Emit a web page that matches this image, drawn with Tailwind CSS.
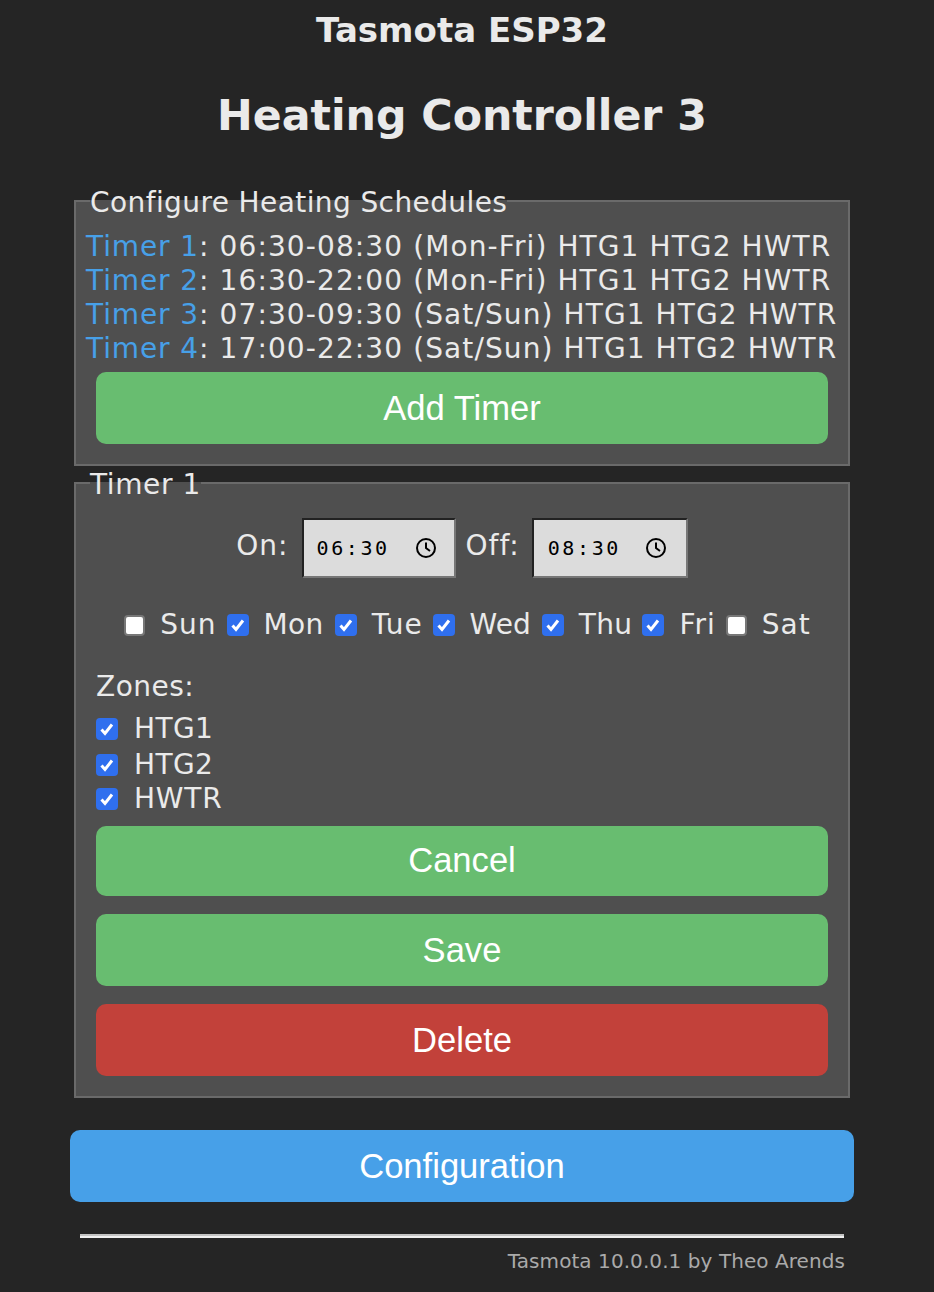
<!DOCTYPE html>
<html lang="en">
<head>
    <meta charset="UTF-8">
    <title>Heating Controller 3</title>
    <script src="https://cdn.jsdelivr.net/npm/@tailwindcss/browser@4"></script>
</head>
<body class="bg-[#252525] text-[#eaeaea] font-['DejaVu_Sans',sans-serif] h-[1292px] overflow-hidden">

<div class="w-[784px] ml-[70px]">

    <h3 class="text-[34px] leading-[38px] font-bold text-center pt-[11px]">Tasmota ESP32</h3>
    <h2 class="text-[42.7px] leading-[52px] font-bold text-center mt-[40px] mb-[44px]">Heating Controller 3</h2>

    <!-- Schedules -->
    <fieldset class="mx-[4px] border-2 border-[#6a6a6a] bg-[#4f4f4f] px-[10px] h-[281px]">
        <legend class="ml-[4px] text-[28px] leading-[32px] tracking-[0.4px]"><span class="relative top-[2px]">Configure Heating Schedules</span></legend>
        <div class="text-[28px] leading-[34px] tracking-[1.1px] whitespace-nowrap pt-[1px] mt-[12px] -mb-[1px]">
            <div><span class="text-[#47a0e8] tracking-[0.9px]">Timer 1</span>: 06:30-08:30 (Mon-Fri) HTG1 HTG2 HWTR</div>
            <div><span class="text-[#47a0e8] tracking-[0.9px]">Timer 2</span>: 16:30-22:00 (Mon-Fri) HTG1 HTG2 HWTR</div>
            <div><span class="text-[#47a0e8] tracking-[0.9px]">Timer 3</span>: 07:30-09:30 (Sat/Sun) HTG1 HTG2 HWTR</div>
            <div><span class="text-[#47a0e8] tracking-[0.9px]">Timer 4</span>: 17:00-22:30 (Sat/Sun) HTG1 HTG2 HWTR</div>
        </div>
        <button class="block w-[732px] h-[72px] mx-[10px] mt-[7px] pt-[2px] rounded-[10px] bg-[#68bd70] text-white font-['Liberation_Sans',sans-serif] text-[34.6px]">Add Timer</button>
    </fieldset>

    <!-- Timer editor -->
    <fieldset class="mx-[4px] mt-[1px] border-2 border-[#6a6a6a] bg-[#4f4f4f] px-[20px] h-[631px]">
        <legend class="-ml-[6px] text-[28px] leading-[32px] tracking-[0.6px]"><span class="relative top-[2px]">Timer 1</span></legend>

        <div class="flex justify-center items-center mt-[19px] text-[28px] tracking-[1px]">
            <span class="mb-[4px] mr-[13px]">On:</span>
            <div class="w-[154px] h-[60px] bg-[#dcdcdc] border-2 border-t-[#222] border-l-[#222] border-r-[#777] border-b-[#777] flex items-center justify-between pl-[13px] pr-[18px] text-black text-[20px] tracking-[2.6px] font-['DejaVu_Sans_Mono',monospace]">
                <span>06:30</span>
                <svg class="w-[20px] h-[20px]" viewBox="0 0 20 20" fill="none" stroke="black" stroke-width="2"><circle cx="10" cy="10" r="9"/><path d="M10 4.5v5.5l4 3"/></svg>
            </div>
            <span class="mb-[4px] ml-[10px] mr-[12px]">Off:</span>
            <div class="w-[156px] h-[60px] bg-[#dcdcdc] border-2 border-t-[#222] border-l-[#222] border-r-[#777] border-b-[#777] flex items-center justify-between pl-[14px] pr-[20px] text-black text-[20px] tracking-[2.6px] font-['DejaVu_Sans_Mono',monospace]">
                <span>08:30</span>
                <svg class="w-[20px] h-[20px]" viewBox="0 0 20 20" fill="none" stroke="black" stroke-width="2"><circle cx="10" cy="10" r="9"/><path d="M10 4.5v5.5l4 3"/></svg>
            </div>
        </div>

        <div class="flex justify-center items-center pl-[11px] mt-[30px] text-[28px] leading-[34px] tracking-[1px] whitespace-nowrap">
            <span class="w-[21px] h-[21px] rounded-[4px] bg-white border-2 border-[#777] mr-[15px]"></span><span class="mr-[10px]">Sun</span>
            <span class="w-[22px] h-[22px] rounded-[4px] bg-[#2f6fee] flex items-center justify-center mr-[15px]"><svg class="w-[16px] h-[16px]" viewBox="0 0 16 16" fill="none" stroke="white" stroke-width="3"><path d="M2.5 8.5l3.5 4 7-9"/></svg></span><span class="mr-[11px] tracking-[0.4px]">Mon</span>
            <span class="w-[22px] h-[22px] rounded-[4px] bg-[#2f6fee] flex items-center justify-center mr-[15px]"><svg class="w-[16px] h-[16px]" viewBox="0 0 16 16" fill="none" stroke="white" stroke-width="3"><path d="M2.5 8.5l3.5 4 7-9"/></svg></span><span class="mr-[10px]">Tue</span>
            <span class="w-[22px] h-[22px] rounded-[4px] bg-[#2f6fee] flex items-center justify-center mr-[15px]"><svg class="w-[16px] h-[16px]" viewBox="0 0 16 16" fill="none" stroke="white" stroke-width="3"><path d="M2.5 8.5l3.5 4 7-9"/></svg></span><span class="mr-[11px] tracking-[0px]">Wed</span>
            <span class="w-[22px] h-[22px] rounded-[4px] bg-[#2f6fee] flex items-center justify-center mr-[15px]"><svg class="w-[16px] h-[16px]" viewBox="0 0 16 16" fill="none" stroke="white" stroke-width="3"><path d="M2.5 8.5l3.5 4 7-9"/></svg></span><span class="mr-[10px] tracking-[0.4px]">Thu</span>
            <span class="w-[22px] h-[22px] rounded-[4px] bg-[#2f6fee] flex items-center justify-center mr-[15px]"><svg class="w-[16px] h-[16px]" viewBox="0 0 16 16" fill="none" stroke="white" stroke-width="3"><path d="M2.5 8.5l3.5 4 7-9"/></svg></span><span class="mr-[10px]">Fri</span>
            <span class="w-[21px] h-[21px] rounded-[4px] bg-white border-2 border-[#777] mr-[15px]"></span><span>Sat</span>
        </div>

        <div class="text-[28px] leading-[34px] tracking-[0.5px] mt-[27px] pt-[1px] -mb-[1px]">Zones:</div>
        <div class="text-[28px] tracking-[0.4px] mt-[8px]">
            <div class="flex items-center h-[36px]"><span class="w-[22px] h-[22px] rounded-[4px] bg-[#2f6fee] flex items-center justify-center mr-[16px]"><svg class="w-[16px] h-[16px]" viewBox="0 0 16 16" fill="none" stroke="white" stroke-width="3"><path d="M2.5 8.5l3.5 4 7-9"/></svg></span>HTG1</div>
            <div class="flex items-center h-[36px]"><span class="w-[22px] h-[22px] rounded-[4px] bg-[#2f6fee] flex items-center justify-center mr-[16px]"><svg class="w-[16px] h-[16px]" viewBox="0 0 16 16" fill="none" stroke="white" stroke-width="3"><path d="M2.5 8.5l3.5 4 7-9"/></svg></span>HTG2</div>
            <div class="flex items-center h-[32px] tracking-[0.8px]"><span class="w-[22px] h-[22px] rounded-[4px] bg-[#2f6fee] flex items-center justify-center mr-[16px]"><svg class="w-[16px] h-[16px]" viewBox="0 0 16 16" fill="none" stroke="white" stroke-width="3"><path d="M2.5 8.5l3.5 4 7-9"/></svg></span>HWTR</div>
        </div>

        <div class="flex flex-col gap-[18px] mt-[11px] font-['Liberation_Sans',sans-serif] text-[34.6px] text-white">
            <button class="h-[70px] rounded-[10px] bg-[#68bd70]">Cancel</button>
            <button class="h-[72px] pt-[2px] rounded-[10px] bg-[#68bd70]">Save</button>
            <button class="h-[72px] pt-[2px] rounded-[10px] bg-[#c2413a]">Delete</button>
        </div>
    </fieldset>

    <button class="block w-[784px] h-[72px] mt-[32px] pt-[2px] rounded-[10px] bg-[#47a0e8] text-white font-['Liberation_Sans',sans-serif] text-[34.6px]">Configuration</button>

    <hr class="mx-[10px] mt-[32px] h-[4px] border-0 border-t-2 border-t-[#c4c4c4] bg-[#f0f0f0]">
    <div class="text-right text-[20px] leading-[26px] tracking-[0.07px] text-[#aaaaaa] mt-[10px] mr-[9px]">Tasmota 10.0.0.1 by Theo Arends</div>

</div>

</body>
</html>
